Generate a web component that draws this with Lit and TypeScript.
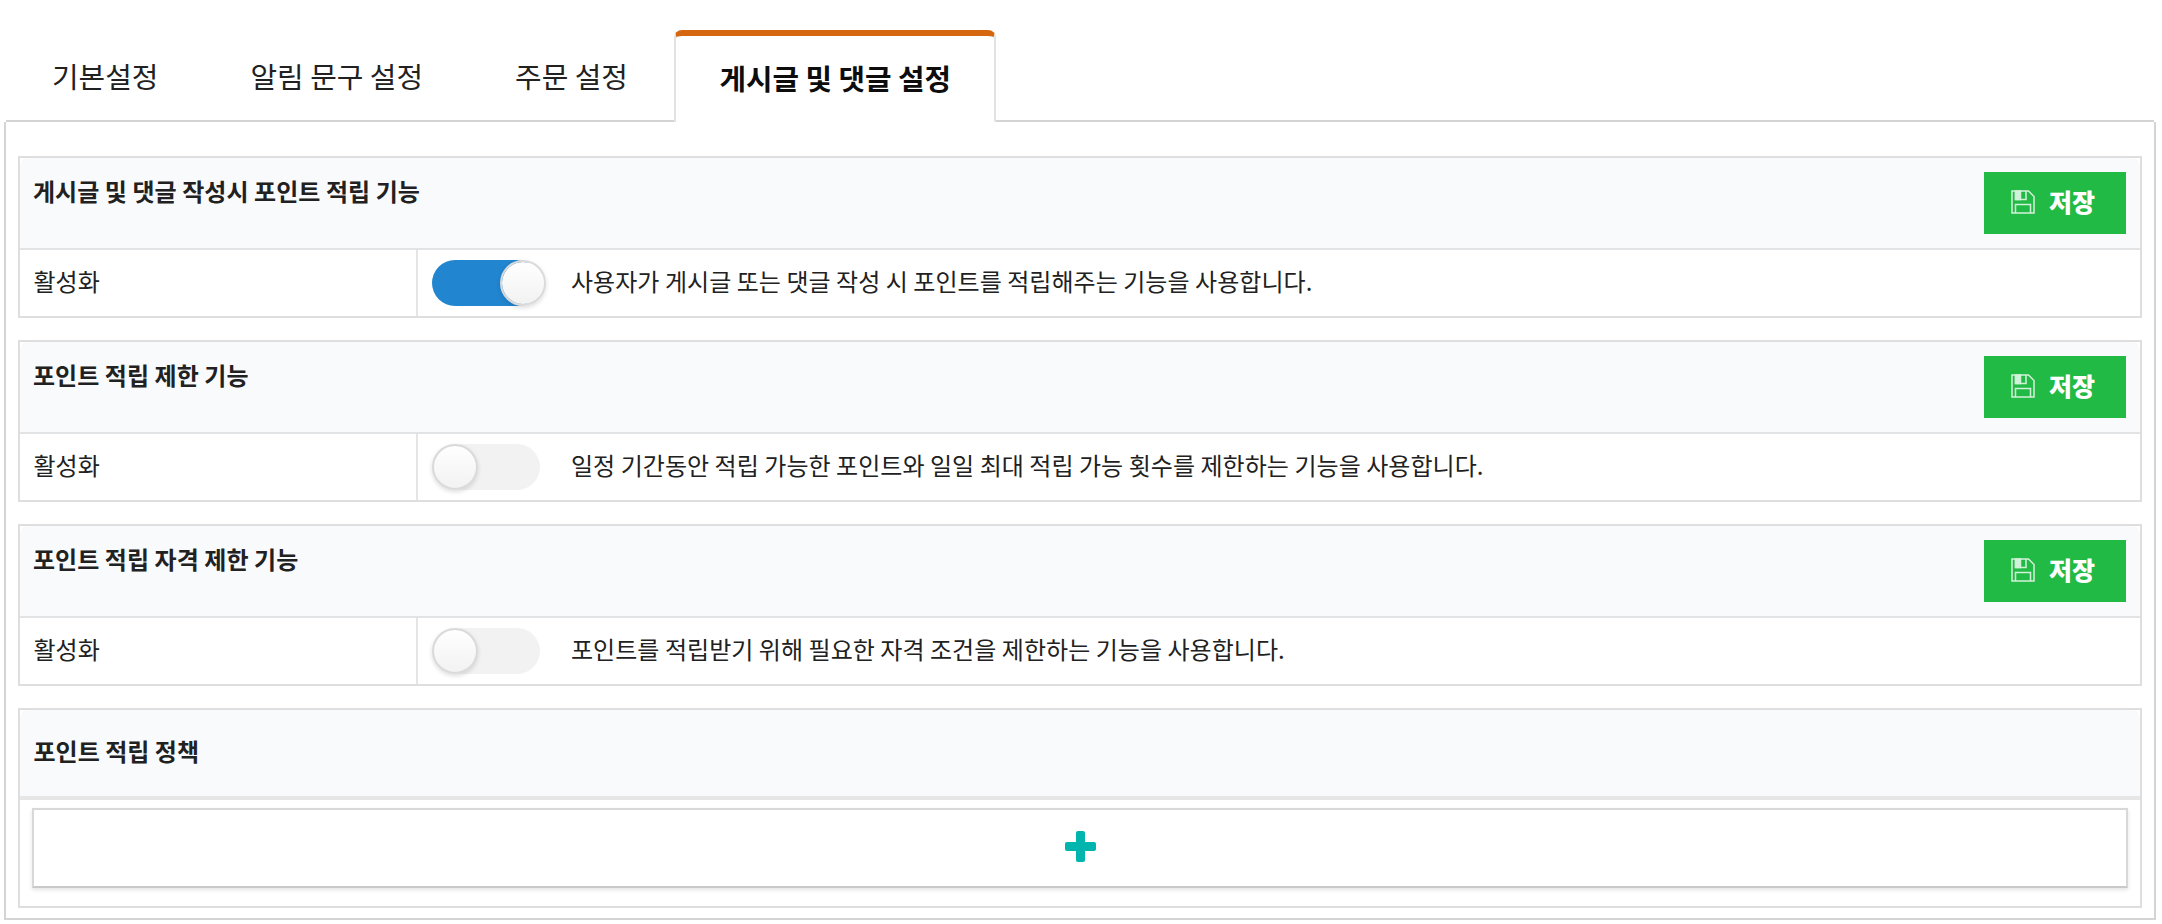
import { LitElement, html, css, svg, nothing } from 'lit';
import { customElement, property, state } from 'lit/decorators.js';
import { classMap } from 'lit/directives/class-map.js';

interface Setting {
  title: string;
  description: string;
  enabled: boolean;
}

const TABS = ['기본설정', '알림 문구 설정', '주문 설정', '게시글 및 댓글 설정'];

const saveIcon = svg`
  <path d="M1 1H17.5L23 6.5V23H1Z" />
  <path d="M4.5 1V9.5H15V1" />
  <path class="fill" d="M4.5 1H9.5V9.5H4.5Z" />
  <path d="M4.5 23V14.5H19.5V23" />
`;

@customElement('toggle-switch')
export class ToggleSwitch extends LitElement {
  @property({ type: Boolean, reflect: true }) checked = false;

  static styles = css`
    :host {
      display: flex;
      box-sizing: border-box;
      width: 108px;
      height: 46px;
      border-radius: 23px;
      background: #f2f2f2;
      cursor: pointer;
    }

    :host([checked]) {
      background: #2185d0;
    }

    .knob {
      box-sizing: border-box;
      flex: none;
      width: 46px;
      height: 46px;
      border: 2px solid #dadada;
      border-radius: 50%;
      background: linear-gradient(#ffffff, #f2f2f2) padding-box;
      box-shadow: 0 2px 4px rgba(34, 36, 38, 0.15);
    }

    :host([checked]) .knob {
      margin-left: 68px;
    }
  `;

  render() {
    return html`<span class="knob"></span>`;
  }
}

@customElement('setting-panel')
export class SettingPanel extends LitElement {
  @property() heading = '';
  @property() description = '';
  @property({ type: Boolean }) enabled = false;

  static styles = css`
    :host {
      display: block;
      border: 2px solid #dededf;
      letter-spacing: 0.045px;
    }

    .header {
      display: flex;
      justify-content: space-between;
      align-items: flex-start;
      box-sizing: border-box;
      height: 92px;
      padding: 14px 14px 14px 13px;
      border-bottom: 2px solid #e2e3e4;
      border-radius: 8px 8px 0 0;
      background: #f9fafc;
    }

    .title {
      font-weight: 700;
      line-height: 38px;
    }

    .save {
      display: flex;
      align-items: center;
      gap: 14px;
      box-sizing: border-box;
      width: 142px;
      height: 62px;
      padding: 0 0 2px 27px;
      border: 0;
      background: #21ba45;
      color: #fff;
      font: inherit;
      font-size: 25px;
      font-weight: 900;
      line-height: 36px;
      cursor: pointer;
    }

    .save span {
      padding-bottom: 2px;
    }

    .save svg {
      width: 24px;
      height: 24px;
      fill: none;
      stroke: #fff;
      stroke-width: 1.5;
      opacity: 0.8;
    }

    .save .fill {
      fill: #fff;
    }

    .row {
      display: flex;
      height: 66px;
    }

    .label {
      box-sizing: border-box;
      width: 398px;
      padding-left: 13.5px;
      border-right: 2px solid #e5e5e6;
      line-height: 62px;
    }

    .control {
      display: flex;
      align-items: center;
      padding-left: 14px;
    }

    .description {
      margin-left: 31px;
      line-height: 62px;
      padding-bottom: 4px;
    }
  `;

  toggle() {
    this.enabled = !this.enabled;
  }

  render() {
    return html`
      <div class="header">
        <span class="title">${this.heading}</span>
        <button class="save">
          <svg viewBox="0 0 24 24">${saveIcon}</svg>
          <span>저장</span>
        </button>
      </div>
      <div class="row">
        <div class="label">활성화</div>
        <div class="control">
          <toggle-switch ?checked=${this.enabled} @click=${this.toggle}></toggle-switch>
          <span class="description">${this.description}</span>
        </div>
      </div>
    `;
  }
}

@customElement('app-root')
export class AppRoot extends LitElement {
  @state() private activeTab = 3;

  private settings: Setting[] = [
    {
      title: '게시글 및 댓글 작성시 포인트 적립 기능',
      description: '사용자가 게시글 또는 댓글 작성 시 포인트를 적립해주는 기능을 사용합니다.',
      enabled: true,
    },
    {
      title: '포인트 적립 제한 기능',
      description: '일정 기간동안 적립 가능한 포인트와 일일 최대 적립 가능 횟수를 제한하는 기능을 사용합니다.',
      enabled: false,
    },
    {
      title: '포인트 적립 자격 제한 기능',
      description: '포인트를 적립받기 위해 필요한 자격 조건을 제한하는 기능을 사용합니다.',
      enabled: false,
    },
  ];

  static styles = css`
    :host {
      display: block;
      box-sizing: border-box;
      height: 924px;
      padding: 30px 6px 0 4px;
      background: #fff;
      color: #212121;
      font-family: 'Noto Sans CJK KR', sans-serif;
      font-size: 24px;
      white-space: nowrap;
    }

    .tabs {
      display: flex;
      height: 92px;
      padding-left: 2px;
    }

    .tab {
      box-sizing: border-box;
      padding: 6px 46px 0;
      border-bottom: 2px solid #d4d4d5;
      font-size: 28.93px;
      line-height: 78px;
      cursor: pointer;
    }

    .tab.active {
      width: 322px;
      padding: 0 43.5px;
      border: 2px solid #e2e2e2;
      border-top: 6px solid #d4670f;
      border-bottom: 0;
      border-radius: 8px 8px 0 0;
      color: #0d0d0d;
      font-size: 28.8px;
      font-weight: 700;
      line-height: 83px;
    }

    .rest {
      flex: 1;
      margin-right: 2px;
      border-bottom: 2px solid #d4d4d5;
    }

    .content {
      display: flex;
      flex-direction: column;
      gap: 22px;
      box-sizing: border-box;
      height: 798px;
      padding: 34px 12px 0;
      border: 2px solid #d4d4d5;
      border-top: 0;
    }

    .policy {
      border: 2px solid #dededf;
      padding-bottom: 18px;
    }

    .policy-title {
      height: 86px;
      padding-left: 13.5px;
      border-bottom: 4px solid #e6e6e7;
      border-radius: 8px 8px 0 0;
      background: #f9fafc;
      font-weight: 700;
      line-height: 82px;
    }

    .add {
      display: flex;
      align-items: center;
      justify-content: center;
      box-sizing: border-box;
      width: 2096px;
      height: 80px;
      margin: 8px 12px 0;
      border: 2px solid #d8d8d9;
      border-bottom-color: #c9c9ca;
      background: #fff;
      box-shadow: 0 2px 4px rgba(34, 36, 38, 0.12);
      cursor: pointer;
    }

    .add svg {
      width: 31px;
      height: 31px;
      margin: 0 0 3px 1px;
      fill: #00b5ad;
    }
  `;

  render() {
    return html`
      <div class="tabs">
        ${TABS.map(
          (tab, i) => html`
            <div
              class=${classMap({ tab: true, active: i === this.activeTab })}
              @click=${() => (this.activeTab = i)}
            >${tab}</div>
          `
        )}
        <div class="rest"></div>
      </div>
      <div class="content">
        ${this.activeTab === 3
          ? html`
              ${this.settings.map(
                (s) => html`
                  <setting-panel
                    .heading=${s.title}
                    .description=${s.description}
                    .enabled=${s.enabled}
                  ></setting-panel>
                `
              )}
              <div class="policy">
                <div class="policy-title">포인트 적립 정책</div>
                <div class="add">
                  <svg viewBox="0 0 31 31">
                    <rect x="11" y="0" width="9" height="31" rx="2" />
                    <rect x="0" y="11" width="31" height="9" rx="2" />
                  </svg>
                </div>
              </div>
            `
          : nothing}
      </div>
    `;
  }
}
